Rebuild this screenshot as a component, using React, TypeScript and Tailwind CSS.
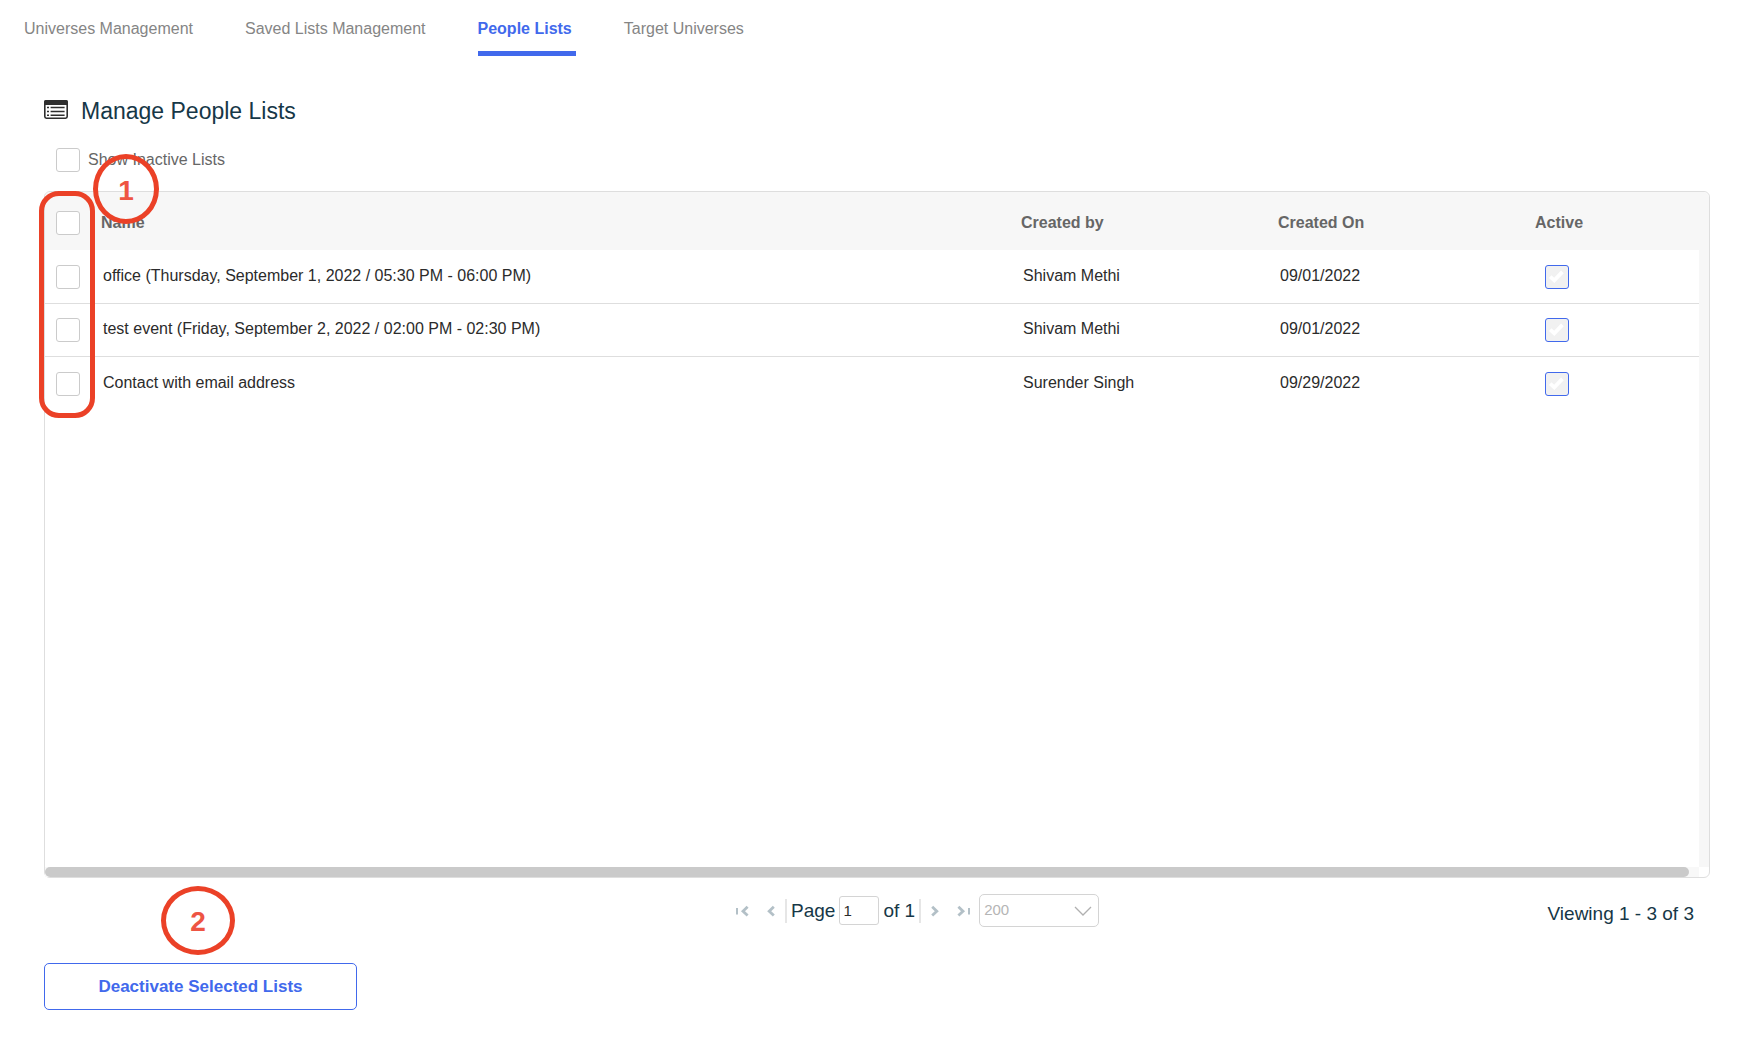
import { useState, type ReactNode } from "react";

const TABS = ["Universes Management", "Saved Lists Management", "People Lists", "Target Universes"];

const ROWS = [
  { name: "office (Thursday, September 1, 2022 / 05:30 PM - 06:00 PM)", by: "Shivam Methi", on: "09/01/2022" },
  { name: "test event (Friday, September 2, 2022 / 02:00 PM - 02:30 PM)", by: "Shivam Methi", on: "09/01/2022" },
  { name: "Contact with email address", by: "Surender Singh", on: "09/29/2022" },
];

function CheckBox({ id, label }: { id?: string; label?: string }) {
  return (
    <input
      id={id}
      aria-label={label}
      type="checkbox"
      className="block size-6 shrink-0 appearance-none rounded-[3px] border border-[#cbcbcb] bg-white checked:bg-[#4169ec]"
    />
  );
}

function ActiveBox({ label }: { label: string }) {
  return (
    <span className="grid size-6">
      <input
        type="checkbox"
        aria-label={label}
        checked
        disabled
        readOnly
        className="col-start-1 row-start-1 block size-6 appearance-none rounded-[3px] border border-[#4169ec] bg-[#f1f1f1]"
      />
      <svg viewBox="0 0 24 24" className="col-start-1 row-start-1 size-6" fill="none" aria-hidden="true">
        <path d="M5.2 11.6 L9.3 15.3 L17.4 6.9" stroke="#fff" strokeWidth="3.8" />
      </svg>
    </span>
  );
}

function ListIcon() {
  return (
    <svg viewBox="0 0 24 19" className="mb-[3px] h-[19px] w-6" aria-hidden="true">
      <rect x="0.8" y="0.8" width="22.4" height="17.4" rx="1.6" fill="#fff" stroke="#2e2e2e" strokeWidth="1.6" />
      <path d="M0 5V2a2 2 0 0 1 2-2h20a2 2 0 0 1 2 2v3z" fill="#2e2e2e" />
      <path d="M3 7.6h2M3 11.4h2M3 15.2h2" stroke="#2e2e2e" strokeWidth="1.5" />
      <path d="M6.6 7.6h14M6.6 11.4h14M6.6 15.2h14" stroke="#2e2e2e" strokeWidth="1.5" />
    </svg>
  );
}

function PagerIcon({ d, bar }: { d: string; bar?: string }) {
  return (
    <svg viewBox="0 0 14 12" className="h-3 w-[14px]" fill="none" stroke="#b3c0c7" aria-hidden="true">
      <path d={d} strokeWidth="2.8" />
      {bar && <path d={bar} strokeWidth="2" />}
    </svg>
  );
}

function PagerButton({ label, children, wide }: { label: string; children: ReactNode; wide?: boolean }) {
  return (
    <button
      type="button"
      aria-label={label}
      className={wide ? "flex h-8 w-[30px] items-center justify-center" : "flex h-8 w-7 items-center justify-center"}
    >
      {children}
    </button>
  );
}

function Callout({ children, className }: { children: ReactNode; className: string }) {
  return (
    <div
      className={`pointer-events-none absolute flex items-center justify-center rounded-[50%] border-[5px] border-[#eb4127] pt-[3px] text-[28px] leading-8 font-bold text-[#ee5443] ${className}`}
    >
      {children}
    </div>
  );
}

const TH = "h-[59px] border-b border-white px-2 pt-[3px] text-left align-middle font-bold text-[#666]";
const TD = "px-[10px] pb-[2px] align-middle";

export default function App() {
  const [active, setActive] = useState("People Lists");

  return (
    <div className="min-h-screen bg-white font-['Liberation_Sans',Arial,sans-serif] text-base text-[#2b2b2b]">
      <nav className="flex gap-12 pt-[17px] pl-6">
        {TABS.map((tab) => (
          <button
            key={tab}
            type="button"
            onClick={() => setActive(tab)}
            className={
              tab === active
                ? "border-b-[5px] border-[#4169ec] pr-1 pb-[10px] text-left leading-6 font-bold text-[#4169ec]"
                : "border-b-[5px] border-transparent pr-1 pb-[10px] text-left leading-6 text-[#858585]"
            }
          >
            {tab}
          </button>
        ))}
      </nav>

      <main className="mt-[39px] mr-[54px] ml-11">
        <div className="flex items-center gap-[13px]">
          <ListIcon />
          <h1 className="text-[23px] leading-8 text-[#163747]">Manage People Lists</h1>
        </div>

        <div className="mt-[21px] ml-3 flex items-center gap-2">
          <CheckBox id="show-inactive" />
          <label htmlFor="show-inactive" className="leading-[22px] text-[#666]">
            Show Inactive Lists
          </label>
        </div>

        <section className="relative mt-[19px] rounded-md border border-[#dedede]">
          <div className="flex min-h-[675px] rounded-t-md bg-[#f7f7f7]">
            <div className="min-w-0 flex-1 rounded-tl-md bg-white">
              <table className="w-full table-fixed border-separate border-spacing-0">
                <colgroup>
                  <col className="w-12" />
                  <col />
                  <col className="w-[257px]" />
                  <col className="w-[257px]" />
                  <col className="w-[172px]" />
                </colgroup>
                <thead className="bg-[#f7f7f7]">
                  <tr>
                    <th scope="col" className="h-[59px] rounded-tl-md border-b border-white pt-[3px] pl-[11px] align-middle">
                      <CheckBox label="Select all lists" />
                    </th>
                    <th scope="col" className={TH}>Name</th>
                    <th scope="col" className={TH}>Created by</th>
                    <th scope="col" className={TH}>Created On</th>
                    <th scope="col" className={TH}>Active</th>
                  </tr>
                </thead>
                <tbody className="[&>tr:not(:last-child)>td]:border-b [&>tr>td]:h-[53px] [&>tr>td]:border-[#dedede]">
                  {ROWS.map((row) => (
                    <tr key={row.name}>
                      <td className="pl-[11px] align-middle">
                        <CheckBox label={`Select ${row.name}`} />
                      </td>
                      <td className={TD}>{row.name}</td>
                      <td className={TD}>{row.by}</td>
                      <td className={TD}>{row.on}</td>
                      <td className="pl-[18px] align-middle">
                        <ActiveBox label={`${row.name} is active`} />
                      </td>
                    </tr>
                  ))}
                </tbody>
              </table>
            </div>
            <div className="w-[10px]" />
          </div>
          <div className="mr-[10px] bg-[#f8f8f8] pr-[10px]">
            <div className="h-[10px] rounded-full bg-[#cacaca]" />
          </div>

          <div className="pointer-events-none absolute -top-px -left-[6px] h-[227px] w-14 rounded-[20px] border-[5px] border-[#eb4127]" />
          <Callout className="-top-[38px] left-12 h-[70px] w-[66px]">1</Callout>
        </section>

        <div className="mt-4 flex items-center">
          <div className="ml-[41%] flex items-center">
            <PagerButton label="First page" wide>
              <PagerIcon d="M12.6 1.8 L8 6.2 L12.6 10.6" bar="M2 3v6.5" />
            </PagerButton>
            <PagerButton label="Previous page">
              <PagerIcon d="M9.8 1.8 L5.2 6.2 L9.8 10.6" />
            </PagerButton>
            <div className="h-6 w-[2px] bg-[#e6e6e6]" />
            <label htmlFor="page" className="mx-1 text-[19px] leading-6 text-[#163747]">
              Page
            </label>
            <input
              id="page"
              defaultValue="1"
              className="h-[29px] w-10 rounded-[3px] border border-[#d4d4d4] bg-white px-[3px] text-[15px]"
            />
            <span className="mx-1 text-[19px] leading-6 text-[#163747]">of 1</span>
            <div className="h-6 w-[2px] bg-[#e6e6e6]" />
            <PagerButton label="Next page">
              <PagerIcon d="M4.2 1.8 L8.8 6.2 L4.2 10.6" />
            </PagerButton>
            <PagerButton label="Last page" wide>
              <PagerIcon d="M1.4 1.8 L6 6.2 L1.4 10.6" bar="M12 3v6.5" />
            </PagerButton>
            <div className="grid">
              <select
                aria-label="Lists per page"
                disabled
                defaultValue="200"
                className="col-start-1 row-start-1 h-[33px] w-[120px] appearance-none rounded-[5px] border border-[#d4d4d4] bg-white px-1 text-[15px] text-[#b5b5b5] opacity-100"
              >
                <option>200</option>
              </select>
              <svg
                viewBox="0 0 18 10"
                className="pointer-events-none col-start-1 row-start-1 mr-[7px] h-[10px] w-[18px] self-center justify-self-end"
                fill="none"
                aria-hidden="true"
              >
                <path d="M1 1 L9 9 L17 1" stroke="#b0b0b0" strokeWidth="1.3" />
              </svg>
            </div>
          </div>
          <p className="mr-4 ml-auto pt-[6px] text-[19px] leading-6 text-[#163747]">Viewing 1 - 3 of 3</p>
        </div>

        <div className="relative mt-9 w-fit">
          <button
            type="button"
            className="h-[47px] w-[313px] rounded-[5px] border border-[#4169ec] bg-white text-[17px] font-bold text-[#4169ec]"
          >
            Deactivate Selected Lists
          </button>
          <Callout className="-top-[77px] left-[117px] h-[69px] w-[74px]">2</Callout>
        </div>
      </main>
    </div>
  );
}
